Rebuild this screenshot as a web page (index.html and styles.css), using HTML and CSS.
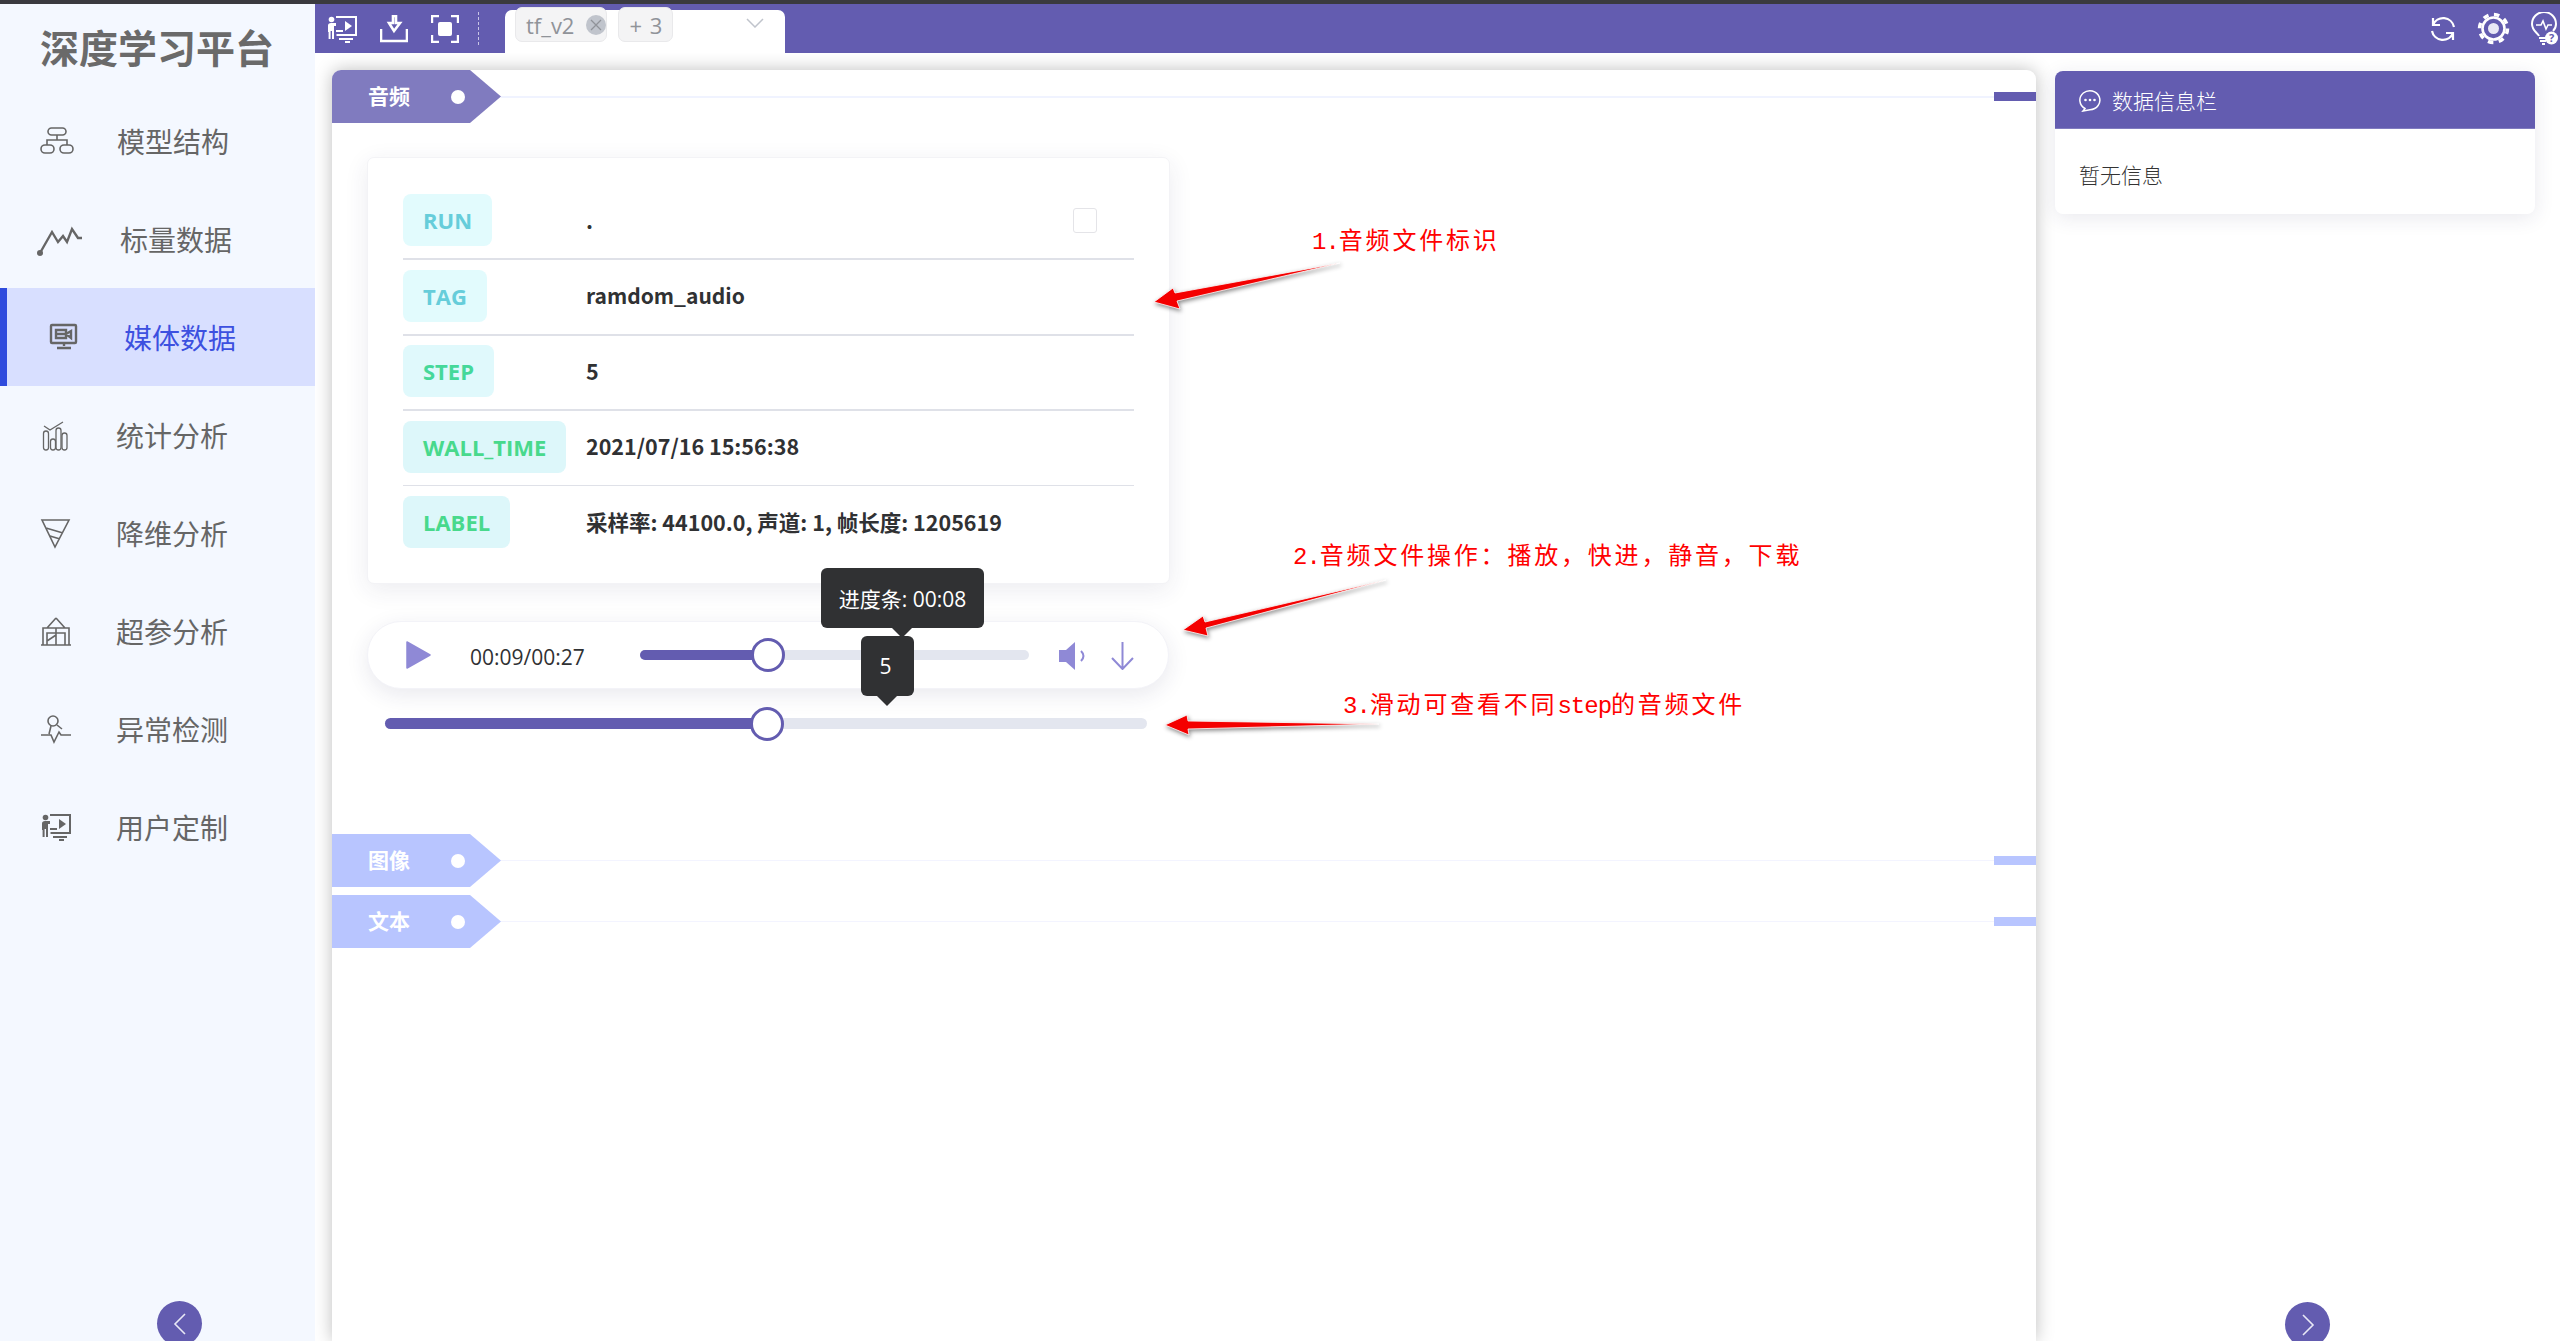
FILE: index.html
```html
<!DOCTYPE html>
<html lang="zh-CN">
<head>
<meta charset="utf-8">
<title>深度学习平台</title>
<link rel="stylesheet" href="styles.css">
</head>
<body>
<svg class="defs" width="0" height="0" aria-hidden="true">
  <symbol id="presenter" viewBox="0 0 30 28">
    <circle cx="4.5" cy="4.5" r="2.8" fill="currentColor"/>
    <path d="M1 10.5q0-2.500 3-2.500h5v3H7v13H5v-8H3.600v8H1.600v-7H1z" fill="currentColor"/>
    <path d="M9 2h20v18H9.500M12 24h14M18 27h5" fill="none" stroke="currentColor" stroke-width="2"/>
    <path d="M18 6l7 5-7 5z" fill="currentColor"/>
    <path d="M9 16h7" stroke="currentColor" stroke-width="2"/>
  </symbol>
</svg>
<div class="app">
  <aside class="sidebar">
    <div class="logo">深度学习平台</div>
    <nav class="menu">
      <a class="menu-item menu-item-first">
        <svg class="menu-icon" viewBox="0 0 81 40"><g transform="translate(3 6)" class="line-icon"><rect x="8" y="1" width="18" height="7" rx="3.500"/><path d="M17 8v5M7 18v-5h20v5"/><rect x="1" y="18" width="13" height="8" rx="4"/><rect x="20" y="18" width="13" height="8" rx="4"/></g></svg>
        <span class="menu-label">模型结构</span>
      </a>
      <a class="menu-item menu-item-shift-a">
        <svg class="menu-icon" viewBox="0 0 81 40"><g class="line-icon line-icon-heavy"><path d="M3 34L15 13l6 10 5-6 4 6 5-13 6 9h4"/></g><circle cx="3" cy="34" r="3" class="dot-icon"/></svg>
        <span class="menu-label">标量数据</span>
      </a>
      <a class="menu-item menu-item-active">
        <svg class="menu-icon" viewBox="0 0 81 40"><g transform="translate(13 7)" class="line-icon line-icon-heavy"><rect x="1" y="1" width="25" height="18" rx="1"/><path d="M6 6h10v8H6zM6 10h10M16 10l5-3v7zM14 19v3M7 24h14"/></g></svg>
        <span class="menu-label">媒体数据</span>
      </a>
      <a class="menu-item">
        <svg class="menu-icon" viewBox="0 0 81 40"><g transform="translate(6 4)" class="line-icon line-icon-thin"><path d="M1 7l6 4 13-8"/><rect x="0.500" y="12" width="5" height="19" rx="2.500"/><rect x="7.500" y="20" width="5" height="11" rx="2.500"/><rect x="13" y="9" width="5" height="22" rx="2.500"/><rect x="19" y="14" width="5" height="17" rx="2.500"/></g></svg>
        <span class="menu-label">统计分析</span>
      </a>
      <a class="menu-item">
        <svg class="menu-icon" viewBox="0 0 81 40"><g transform="translate(4 6)" class="line-icon"><path d="M1 1h27L14 28zM5 9l17 5M9 17l10 3"/></g></svg>
        <span class="menu-label">降维分析</span>
      </a>
      <a class="menu-item">
        <svg class="menu-icon" viewBox="0 0 81 40"><g transform="translate(4 6)" class="line-icon"><path d="M0 28h30M2 28V11h26v17M15 1L6 11M15 1l9 10M6 16h18v12H6zM15 11v17M6 24l9-6"/></g></svg>
        <span class="menu-label">超参分析</span>
      </a>
      <a class="menu-item">
        <svg class="menu-icon" viewBox="0 0 81 40"><g transform="translate(4 6)" class="line-icon"><circle cx="12" cy="6" r="5"/><path d="M16 10l5 4M10 11l-2 8M0 20h10l3 7 5-10 2 3h10"/></g></svg>
        <span class="menu-label">异常检测</span>
      </a>
      <a class="menu-item">
        <svg class="menu-icon menu-icon-presenter"><use href="#presenter"/></svg>
        <span class="menu-label">用户定制</span>
      </a>
    </nav>
    <button class="round-btn round-btn-left" type="button" aria-label="收起">
      <svg width="14" height="22" viewBox="0 0 14 22"><path d="M12 1L2 11l10 10" class="chevron-line"/></svg>
    </button>
  </aside>

  <div class="workspace">
    <header class="topbar">
      <div class="tool-group">
        <svg class="tool-icon tool-icon-wide"><use href="#presenter"/></svg>
        <svg class="tool-icon" viewBox="0 0 28 28"><path d="M9 8H13V1h3v7h4l-6 8zM1 14v12h26V14" fill="none" stroke="currentColor" stroke-width="2.600"/></svg>
        <svg class="tool-icon" viewBox="0 0 28 28"><path d="M8 1H1v7M20 1h7v7M8 27H1v-7M20 27h7v-7" fill="none" stroke="currentColor" stroke-width="2.400"/><rect x="7" y="7" width="14" height="14" rx="2" fill="currentColor"/></svg>
      </div>
      <span class="tool-sep"></span>
      <div class="run-select">
        <span class="chip">tf_v2<span class="chip-close"><svg width="12" height="12" viewBox="0 0 12 12"><path d="M1 1l10 10M11 1L1 11" stroke="#909399" stroke-width="1.300"/></svg></span></span>
        <span class="chip chip-more">+ 3</span>
        <svg class="select-arrow" width="18" height="10" viewBox="0 0 18 10"><path d="M1 1l8 8 8-8" fill="none" stroke="#c0c4cc" stroke-width="1.500"/></svg>
      </div>
      <div class="tool-group tool-group-right">
        <svg class="tool-icon tool-refresh" viewBox="0 0 26 26"><path d="M3 9A11 11 0 0 1 24 11M3 2v7h7M23 17A11 11 0 0 1 2 15M23 24v-7h-7" fill="none" stroke="currentColor" stroke-width="2.200"/></svg>
        <svg class="tool-icon tool-gear" viewBox="0 0 33 33"><circle cx="16.500" cy="16.500" r="11" fill="none" stroke="currentColor" stroke-width="2.600"/><circle cx="16.500" cy="16.500" r="14" fill="none" stroke="currentColor" stroke-width="3.500" stroke-dasharray="5.500 5.500"/><circle cx="16.500" cy="16.500" r="5.500" fill="#e9e9f6"/></svg>
        <svg class="tool-icon tool-bulb" viewBox="0 0 29 33"><path d="M9 24c-1-3-7-5-7-12a12 12 0 0 1 24 0c0 3-1 5-3 7M9 26h8M10 29h6M12 32h3" fill="none" stroke="currentColor" stroke-width="2"/><path d="M6 13h5l2-4 3 8 2-4h4" fill="none" stroke="currentColor" stroke-width="1.600"/><circle cx="21.500" cy="26" r="6.500" fill="#fff"/><text x="21.500" y="30" class="bulb-mark">?</text></svg>
      </div>
    </header>

    <div class="content">
      <main class="main-panel">
        <section class="section">
          <div class="section-bar">
            <div class="section-tab"><span class="section-name">音频</span><span class="section-dot"></span></div>
            <span class="section-line"></span>
            <span class="section-marker"></span>
          </div>
          <div class="audio-card">
            <div class="info-row">
              <span class="info-tag tag-blue">RUN</span><span class="info-value">.</span><span class="info-check"></span>
            </div>
            <div class="info-row">
              <span class="info-tag tag-blue">TAG</span><span class="info-value info-value-narrow">ramdom_audio</span>
            </div>
            <div class="info-row">
              <span class="info-tag tag-green">STEP</span><span class="info-value">5</span>
            </div>
            <div class="info-row info-row-thin">
              <span class="info-tag tag-green tag-deep">WALL_TIME</span><span class="info-value">2021/07/16 15:56:38</span>
            </div>
            <div class="info-row info-row-last">
              <span class="info-tag tag-green tag-deep">LABEL</span><span class="info-value">采样率: 44100.0, 声道: 1, 帧长度: 1205619</span>
            </div>
          </div>
          <div class="player">
            <svg class="play-icon" width="25" height="28" viewBox="0 0 25 28"><path d="M1 1l23 13L1 27z" fill="#8f89d6" stroke="#8f89d6" stroke-width="1.500" stroke-linejoin="round"/></svg>
            <span class="player-time">00:09/00:27</span>
            <div class="slider slider-audio">
              <span class="slider-fill" style="width:33%"></span>
              <span class="slider-knob" style="left:33%"></span>
              <span class="tooltip tooltip-progress">进度条: 00:08</span>
            </div>
            <svg class="volume-icon" width="27" height="28" viewBox="0 0 27 28"><path d="M0 8h7l9-8v28l-9-8H0z" fill="#8f89d6"/><path d="M22 9q5 5 0 10" fill="none" stroke="#8f89d6" stroke-width="2"/></svg>
            <svg class="download-icon" width="23" height="28" viewBox="0 0 23 28"><path d="M11.500 0v27M1 16l10.500 11L22 16" fill="none" stroke="#8f89d6" stroke-width="2"/></svg>
          </div>
          <div class="slider slider-step">
            <span class="slider-fill" style="width:50.100%"></span>
            <span class="slider-knob" style="left:50.100%"></span>
            <span class="tooltip tooltip-step">5</span>
          </div>
        </section>
        <section class="section section-collapsed section-first-collapsed">
          <div class="section-bar">
            <div class="section-tab"><span class="section-name">图像</span><span class="section-dot"></span></div>
            <span class="section-line"></span>
            <span class="section-marker"></span>
          </div>
        </section>
        <section class="section section-collapsed">
          <div class="section-bar">
            <div class="section-tab"><span class="section-name">文本</span><span class="section-dot"></span></div>
            <span class="section-line"></span>
            <span class="section-marker"></span>
          </div>
        </section>
      </main>

      <div class="side-column">
        <aside class="info-panel">
          <div class="info-panel-head">
            <svg width="22" height="23" viewBox="0 0 22 23"><path d="M6 19.500a10 9.500 0 1 1 5 1.200L4 22z" fill="none" stroke="#fff" stroke-width="1.500"/><circle cx="6.500" cy="11" r="1.300" fill="#fff"/><circle cx="11" cy="11" r="1.300" fill="#fff"/><circle cx="15.500" cy="11" r="1.300" fill="#fff"/></svg>
            <span>数据信息栏</span>
          </div>
          <div class="info-panel-body">暂无信息</div>
        </aside>
        <button class="round-btn round-btn-right" type="button" aria-label="展开">
          <svg width="14" height="22" viewBox="0 0 14 22"><path d="M2 1l10 10L2 21" class="chevron-line"/></svg>
        </button>
      </div>
    </div>
  </div>

  <div class="annotations">
    <svg class="anno-arrows" width="2560" height="1341" viewBox="0 0 2560 1341">
      <path class="arrow-shape" d="M1340 263L1175 293l-2-5-19 14 26 7-3-8z"/>
      <path class="arrow-shape" d="M1386 580L1205 622l-2-6-20 14 25 6-2-8z"/>
      <path class="arrow-shape" d="M1379 724L1188 721l-1-6-22 10 24 10-1-6z"/>
    </svg>
    <p class="anno-text anno-1"><span class="anno-latin">1.</span>音频文件标识</p>
    <p class="anno-text anno-2"><span class="anno-latin">2.</span>音频文件操作：播放，快进，静音，下载</p>
    <p class="anno-text anno-3"><span class="anno-latin">3.</span>滑动可查看不同<span class="anno-latin">step</span>的音频文件</p>
  </div>
</div>
</body>
</html>
```

FILE: styles.css
```css
* { box-sizing: border-box; }
html, body { margin: 0; height: 100%; }
body {
  background: #fff;
  font-family: "Open Sans", "Noto Sans CJK SC", sans-serif;
  overflow: hidden;
}
.defs { position: absolute; }

.app {
  position: relative;
  display: flex;
  height: 1341px;
  border-top: 4px solid #3a3a3f;
  overflow: hidden;
}

/* sidebar */
.sidebar {
  position: relative;
  flex: 0 0 315px;
  background: #f4f8ff;
}
.logo {
  height: 88px;
  padding: 0 0 4px 40px;
  display: flex;
  align-items: center;
  font-family: "Noto Sans CJK SC", sans-serif;
  font-size: 39px;
  font-weight: 700;
  color: #6a6a6a;
}
.menu { display: flex; flex-direction: column; }
.menu-item {
  height: 98px;
  padding-left: 37px;
  display: flex;
  align-items: center;
  color: #666;
}
.menu-icon { width: 81px; height: 40px; flex: none; }
.menu-icon-presenter { padding: 6px 47px 6px 4px; color: #666; }
.menu-label {
  font-family: "Noto Sans CJK SC", sans-serif;
  font-size: 28px;
  font-weight: 400;
  line-height: 1;
  margin-left: -2px;
}
.menu-item-first .menu-label { margin-left: -1px; }
.menu-item-shift-a .menu-label { margin-left: 2px; }
.menu-item-active {
  background: #d8dfff;
  border-left: 7px solid #2f4bdd;
  padding-left: 30px;
  color: #3c50e0;
}
.menu-item-active .menu-label { margin-left: 6px; }
.line-icon { fill: none; stroke: #666; stroke-width: 1.600; }
.line-icon-heavy { stroke-width: 2.400; }
.line-icon-thin { stroke-width: 1.300; }
.dot-icon { fill: #666; }

.round-btn {
  position: absolute;
  width: 45px;
  height: 45px;
  padding: 0;
  border: 0;
  border-radius: 50%;
  background: #635cb0;
  display: flex;
  align-items: center;
  justify-content: center;
}
.round-btn-left { left: 157px; top: 1297px; }
.chevron-line { fill: none; stroke: #e8e8f5; stroke-width: 1.600; }

/* top bar */
.workspace { flex: 1; min-width: 0; display: flex; flex-direction: column; }
.topbar {
  flex: 0 0 49px;
  background: #635cb0;
  display: flex;
  align-items: center;
  padding-left: 12px;
  color: #fff;
}
.tool-group { display: flex; align-items: center; gap: 23px; }
.tool-icon { width: 28px; height: 28px; display: block; color: #fff; }
.tool-icon-wide { width: 30px; }
.tool-sep {
  height: 33px;
  margin-left: 19px;
  border-left: 1px dashed #c9c6e6;
}
.run-select {
  align-self: flex-end;
  position: relative;
  width: 280px;
  height: 43px;
  margin-left: 26px;
  padding-left: 10px;
  background: #fff;
  border-radius: 7px 7px 0 0;
  display: flex;
  align-items: flex-start;
  gap: 11px;
}
.chip {
  margin-top: -3px;
  height: 35px;
  padding: 0 0 0 10px;
  background: #f4f4f5;
  border: 1px solid #e9e9eb;
  border-radius: 7px;
  display: flex;
  align-items: center;
  gap: 12px;
  font-size: 22px;
  color: #909399;
}
.chip-more { width: 55px; padding: 0; justify-content: center; word-spacing: 2px; }
.chip-close {
  width: 20px;
  height: 20px;
  border-radius: 50%;
  background: #c0c4cc;
  display: flex;
  align-items: center;
  justify-content: center;
}
.select-arrow { margin: 8px 21px 0 auto; }
.tool-group-right { margin-left: auto; gap: 0; }
.tool-refresh { width: 26px; height: 26px; margin-right: 21px; }
.tool-gear { width: 33px; height: 33px; margin-right: 20px; }
.tool-bulb { width: 29px; height: 33px; margin-right: 1px; }
.bulb-mark {
  font-size: 11px;
  font-weight: 700;
  fill: #635cb0;
  text-anchor: middle;
}

/* content */
.content { flex: 1; min-height: 0; display: flex; }
.main-panel {
  width: 1704px;
  margin: 17px 0 0 17px;
  background: #fff;
  border-radius: 9px 9px 0 0;
  box-shadow: 0 0 18px rgba(0, 0, 0, 0.26);
  overflow: hidden;
}
.section-bar { height: 53px; display: flex; align-items: center; }
.section-tab {
  flex: 0 0 169px;
  height: 53px;
  background: #807bbf;
  clip-path: polygon(0 0, 138px 0, 100% 50%, 138px 100%, 0 100%);
  display: flex;
  align-items: center;
  padding-left: 36px;
  color: #fff;
}
.section-name {
  font-family: "Noto Sans CJK SC", sans-serif;
  font-size: 21px;
  font-weight: 700;
  line-height: 1;
  margin-top: -2px;
}
.section-dot {
  width: 14px;
  height: 14px;
  margin-left: 41px;
  border-radius: 50%;
  background: #fff;
}
.section-line { flex: 1; height: 2px; background: #f0f3ff; }
.section-marker { flex: 0 0 42px; height: 9px; background: #635cb0; }
.section-collapsed .section-tab { background: #b8c5ff; }
.section-collapsed .section-marker { background: #b8c5ff; }
.section-collapsed .section-line { height: 1px; background: #f3f4ff; }
.section-collapsed { margin-top: 8px; }
.section-first-collapsed { margin-top: 105px; }

/* card */
.audio-card {
  width: 803px;
  height: 427px;
  margin: 34px 0 0 35px;
  padding: 36px 35px 0;
  background: #fff;
  border: 1px solid #f3f3f6;
  border-radius: 7px;
  box-shadow: 0 6px 24px rgba(40, 40, 90, 0.09);
}
.info-row {
  display: flex;
  align-items: center;
  padding-bottom: 12px;
  margin-bottom: 9.500px;
  border-bottom: 2px solid #dfe1e8;
}
.info-row-thin { border-bottom-width: 1px; margin-bottom: 10.500px; }
.info-row-last { border-bottom: 0; margin-bottom: 0; }
.info-tag {
  flex: none;
  height: 52px;
  padding: 0 20px;
  margin-right: auto;
  border-radius: 8px;
  display: flex;
  align-items: center;
  font-size: 22px;
  font-weight: 700;
}
.tag-blue { background: #e2fbfd; color: #66cdda; }
.tag-green { background: #e0f9fc; color: #45d89a; }
.tag-deep { background: #ddf7fa; color: #48d98c; }
.info-value {
  position: absolute;
  margin-left: 183px;
  margin-top: -2px;
  font-family: "Noto Sans CJK SC", sans-serif;
  font-size: 21.500px;
  font-weight: 600;
  color: #303133;
}
.info-value-narrow { font-size: 21px; }
.info-check {
  width: 24px;
  height: 25px;
  margin-right: 37px;
  border: 1px solid #e4e4e8;
  border-radius: 3px;
  background: #fff;
}

/* player */
.player {
  width: 802px;
  height: 68px;
  margin: 37px 0 0 35px;
  padding-left: 38px;
  background: #fff;
  border: 1px solid #f3f3f8;
  border-radius: 34px;
  box-shadow: 0 6px 22px rgba(40, 40, 90, 0.1);
  display: flex;
  align-items: center;
}
.play-icon { flex: none; }
.player-time {
  flex: none;
  width: 170px;
  margin: 4px 0 0 39px;
  font-size: 21px;
  color: #303133;
}
.slider {
  position: relative;
  background: #e3e6ef;
  border-radius: 6px;
}
.slider-audio { flex: none; width: 389px; height: 10px; }
.slider-step { width: 762px; height: 11px; margin: 29px 0 0 53px; }
.slider-fill {
  position: absolute;
  left: 0;
  top: 0;
  bottom: 0;
  background: #635cb0;
  border-radius: 6px 0 0 6px;
}
.slider-knob {
  position: absolute;
  top: 50%;
  width: 34px;
  height: 34px;
  transform: translate(-50%, -50%);
  background: #fff;
  border: 3px solid #635cb0;
  border-radius: 50%;
}
.tooltip {
  position: absolute;
  top: -82px;
  height: 60px;
  background: #303133;
  border-radius: 6px;
  color: #fff;
  display: flex;
  align-items: center;
  justify-content: center;
  font-size: 21px;
  font-family: "Open Sans", "Noto Sans CJK SC", sans-serif;
}
.tooltip::after {
  content: "";
  position: absolute;
  top: 100%;
  border: 10px solid transparent;
  border-top-color: #303133;
  border-bottom-width: 0;
}
.tooltip-progress { left: 181px; width: 163px; z-index: 2; }
.tooltip-progress::after { left: 71px; }
.tooltip-step { left: 476px; width: 53px; z-index: 3; padding-right: 4px; }
.tooltip-step::after { left: 16px; }
.volume-icon { flex: none; margin: 2px 0 0 30px; }
.download-icon { flex: none; margin: 2px 0 0 25px; }

/* right */
.side-column { position: relative; flex: 1; padding: 18px 0 0 19px; }
.info-panel {
  width: 480px;
  height: 143px;
  background: #fff;
  border-radius: 8px;
  box-shadow: 0 4px 20px rgba(40, 40, 90, 0.1);
  overflow: hidden;
}
.info-panel-head {
  height: 58px;
  padding: 1px 0 0 24px;
  background: #635cb0;
  border-bottom: 1px solid #807bbf;
  display: flex;
  align-items: center;
  gap: 11px;
  font-family: "Noto Sans CJK SC", sans-serif;
  font-size: 21px;
  font-weight: 300;
  color: #fff;
}
.info-panel-body {
  padding: 30px 0 0 24px;
  font-family: "Noto Sans CJK SC", sans-serif;
  font-size: 21px;
  font-weight: 300;
  line-height: 30px;
  color: #333;
}
.round-btn-right { left: 249px; top: 1249px; }

/* annotations over the screenshot */
.annotations { position: absolute; inset: 0; pointer-events: none; }
.anno-arrows { position: absolute; left: 0; top: -4px; }
.arrow-shape {
  fill: #f40000;
  stroke: #fff;
  stroke-width: 0.800;
  filter: drop-shadow(1px 2px 2px rgba(0, 0, 0, 0.45));
}
.anno-text {
  position: absolute;
  margin: 0;
  font-family: "Liberation Mono", "Noto Sans CJK SC", monospace;
  font-size: 24px;
  font-weight: 400;
  line-height: 34px;
  letter-spacing: 2.800px;
  color: #f00;
  white-space: nowrap;
}
.anno-latin { letter-spacing: -1px; }
.anno-1 { left: 1312px; top: 222px; }
.anno-2 { left: 1293px; top: 537px; }
.anno-3 { left: 1343px; top: 686px; }
```
